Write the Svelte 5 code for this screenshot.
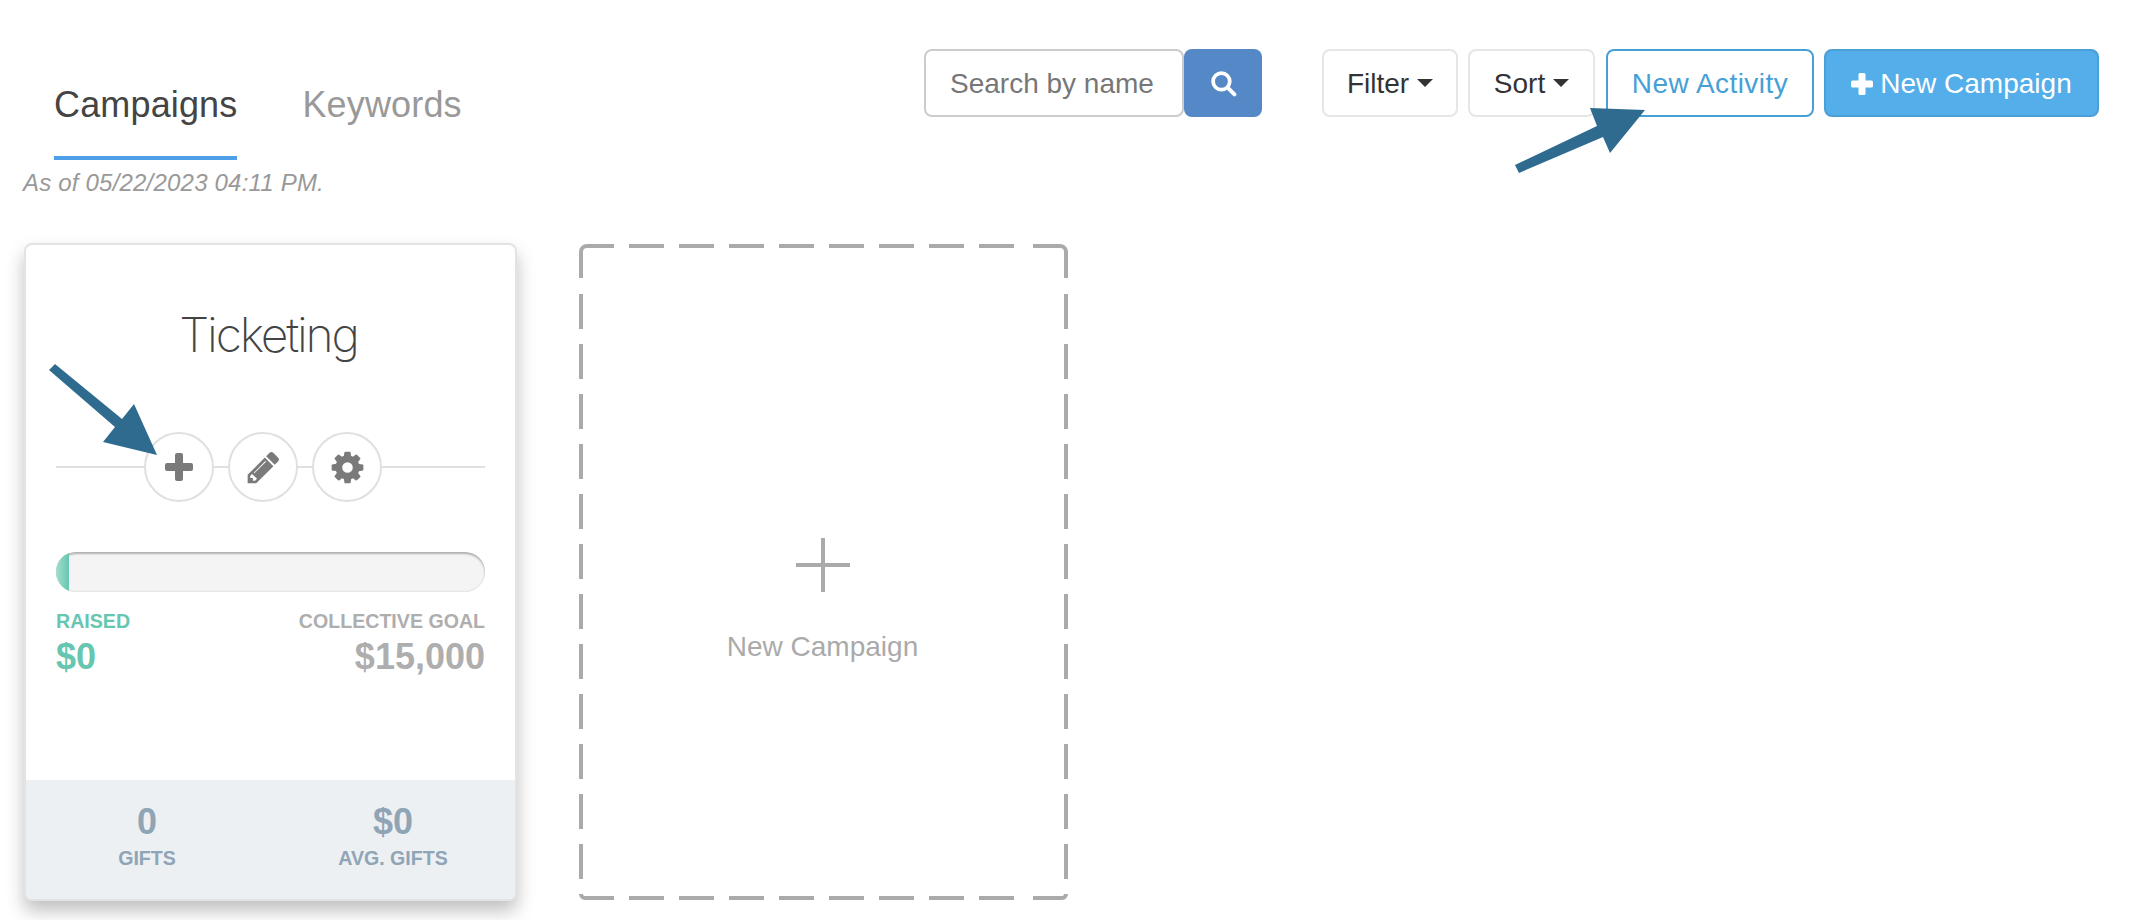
<script>
  const cog = "M1152 896q0-106-75-181t-181-75-181 75-75 181 75 181 181 75 181-75 75-181zm512-109v222q0 12-8 23t-20 13l-185 28q-19 54-39 91 35 50 107 138 10 12 10 25t-9 23q-27 37-99 108t-94 71q-12 0-26-9l-138-108q-44 23-91 38-16 136-29 186-7 28-36 28h-222q-14 0-24.5-8.5t-11.5-21.5l-28-184q-49-16-90-37l-141 107q-10 9-25 9-14 0-25-11-126-114-165-168-7-10-7-23 0-12 8-23 15-21 51-66.5t54-70.5q-27-50-41-99l-183-27q-13-2-21-12.5t-8-23.5v-222q0-12 8-23t19-13l186-28q14-46 39-92-40-57-107-138-10-12-10-24 0-10 9-23 26-36 98.5-107.5t94.5-71.5q13 0 26 10l138 107q44-23 91-38 16-136 29-186 7-28 36-28h222q14 0 24.5 8.5t11.5 21.5l28 184q49 16 90 37l142-107q9-9 24-9 13 0 25 10 129 119 165 170 7 8 7 22 0 12-8 23-15 21-51 66.5t-54 70.5q26 50 41 98l183 28q13 2 21 12.5t8 23.5z";
  const pencil = "M491 1536l91-91-235-235-91 91v107h128v128h107zm523-928q0-22-22-22-10 0-17 7l-542 542q-7 7-7 17 0 22 22 22 10 0 17-7l542-542q7-7 7-17zm-54-192l416 416-832 832h-416v-416zm683 96q0 53-37 90l-166 166-416-416 166-165q36-38 90-38 53 0 91 38l235 234q37 39 37 91z";
</script>

<div class="page">
  <header class="head">
    <div class="left">
      <nav class="tabs">
        <span class="tab active">Campaigns</span>
        <span class="tab">Keywords</span>
      </nav>
      <p class="asof">As of 05/22/2023 04:11 PM.</p>
    </div>
    <div class="tools">
      <div class="search">
        <input class="input" placeholder="Search by name" />
        <button class="searchbtn" aria-label="Search">
          <svg viewBox="0 0 26 26" width="27" height="27"><circle cx="11" cy="11" r="8" fill="none" stroke="#fff" stroke-width="3.6"/><path d="M17 17l6.5 6.5" stroke="#fff" stroke-width="3.8" stroke-linecap="round"/></svg>
        </button>
      </div>
      <div class="btns">
        <button class="btn filter">Filter <i class="caret"></i></button>
        <button class="btn sort">Sort <i class="caret"></i></button>
        <button class="btn outline">New Activity</button>
        <button class="btn primary">
          <svg viewBox="0 0 22 22" width="22" height="22" fill="#fff"><rect x="7.5" y="0" width="7" height="22" rx="1.5"/><rect x="0" y="7.5" width="22" height="7" rx="1.5"/></svg>
          New Campaign
        </button>
      </div>
    </div>
  </header>

  <main class="cards">
    <article class="card">
      <div class="body">
        <h2 class="title">Ticketing</h2>
        <div class="actions">
          <span class="circle"><svg viewBox="0 0 28 28" width="28" height="28" fill="#7a7a7a"><rect x="10" y="0" width="8" height="28" rx="2"/><rect x="0" y="10" width="28" height="8" rx="2"/></svg></span>
          <span class="circle"><svg viewBox="0 0 1792 1792" width="37" height="37"><path fill="#7a7a7a" d={pencil}/></svg></span>
          <span class="circle"><svg viewBox="0 0 1792 1792" width="37" height="37"><path fill="#7a7a7a" d={cog}/></svg></span>
        </div>
        <div class="bar"><div class="fill"></div></div>
        <div class="totals">
          <div class="raised"><div class="label">RAISED</div><div class="amount">$0</div></div>
          <div class="goal"><div class="label">COLLECTIVE GOAL</div><div class="amount">$15,000</div></div>
        </div>
      </div>
      <div class="stats">
        <div class="stat first"><div class="num">0</div><div class="label">GIFTS</div></div>
        <div class="stat second"><div class="num">$0</div><div class="label">AVG. GIFTS</div></div>
      </div>
    </article>

    <article class="newcard">
      <svg class="dashes" viewBox="0 0 489 656" width="489" height="656" fill="none" stroke="#aaa" stroke-width="4">
        <path d="M2 34V8a6 6 0 0 1 6-6H35"/>
        <path d="M454 2H481a6 6 0 0 1 6 6V34"/>
        <path d="M2 650a4 4 0 0 0 4 4H35"/>
        <path d="M454 654H483a4 4 0 0 0 4-4"/>
        <path d="M50 2H440" stroke-dasharray="35 15"/>
        <path d="M50 654H440" stroke-dasharray="35 15"/>
        <path d="M2 50V636" stroke-dasharray="35 15"/>
        <path d="M487 50V636" stroke-dasharray="35 15"/>
      </svg>
      <svg class="bigplus" viewBox="0 0 54 54" width="54" height="54"><path d="M27 0v54M0 27h54" stroke="#aaa" stroke-width="4"/></svg>
      <span class="newlabel">New Campaign</span>
    </article>
  </main>

  <svg class="arrows" viewBox="0 0 2152 920" width="2152" height="920" aria-hidden="true">
    <polygon fill="#2e6b8f" points="49,370 55,364 122,419 134,404 157,455 103,442 115,427"/>
    <polygon fill="#2e6b8f" points="1515,165 1519,173 1603,137 1610,153 1645,110 1590,108 1597,126"/>
  </svg>
</div>

<style>
  :global(body) { margin: 0; background: #fff; }
  .page {
    position: relative;
    width: 2152px;
    height: 920px;
    overflow: hidden;
    font-family: "Liberation Sans", Arial, sans-serif;
    box-sizing: border-box;
    padding: 49px 53px 0 24px;
  }
  .head { display: flex; justify-content: space-between; align-items: flex-start; height: 194px; }
  .left { display: flex; flex-direction: column; }
  .tabs { display: flex; gap: 65px; margin-left: 30px; padding-top: 34px; }
  .tab { font-size: 36px; line-height: 44px; letter-spacing: .15px; color: #999; padding-bottom: 29px; border-bottom: 4px solid transparent; }
  .tab.active { color: #444; border-bottom-color: #4f9fe8; }
  .asof { margin: 8px 0 0 -1px; font-size: 24px; line-height: 30px; letter-spacing: .2px; font-style: italic; color: #999; }
  .tools { display: flex; gap: 60px; }
  .search { display: flex; }
  .input {
    box-sizing: border-box; width: 260px; height: 68px; padding: 2px 24px 0;
    border: 2px solid #ccc; border-radius: 8px;
    font: 28px "Liberation Sans", Arial, sans-serif; color: #333; outline: none;
  }
  .input::placeholder { color: #777; opacity: 1; }
  .searchbtn {
    width: 78px; height: 68px; padding: 0; border: 0; border-radius: 8px;
    background: #5588c6; display: flex; align-items: center; justify-content: center;
  }
  .btns { display: flex; gap: 10px; }
  .btn {
    box-sizing: border-box; height: 68px; padding: 2px 0 0; border: 2px solid #e6e6e6; border-radius: 8px;
    background: #fff; color: #333; font: 28px "Liberation Sans", Arial, sans-serif;
    display: flex; align-items: center; justify-content: center; gap: 8px;
  }
  .filter { width: 136px; }
  .sort { width: 127px; }
  .outline { width: 208px; margin-left: 1px; border-color: #46a0d6; color: #46a0d6; letter-spacing: .45px; }
  .primary { width: 275px; gap: 7px; background: #53aee9; border-color: #4a9fd6; color: #fff; }
  .caret { width: 0; height: 0; margin-top: -2px; border-top: 8px solid #333; border-left: 8px solid transparent; border-right: 8px solid transparent; }

  .cards { display: flex; gap: 62px; align-items: flex-start; }
  .card {
    box-sizing: border-box; width: 493px; height: 658px; border: 2px solid #e3e3e3; border-radius: 8px;
    background: #fff; box-shadow: 0 10px 18px rgba(0,0,0,.25);
    display: flex; flex-direction: column; overflow: hidden;
  }
  .body { flex: 1; padding: 0 30px 0 30px; }
  .title {
    margin: 60px 0 0; padding-right: 4px; text-align: center; font-family: Inter, sans-serif; font-weight: 200; font-size: 48px; line-height: 60px; letter-spacing: -2.2px; color: #444;
  }
  .actions {
    display: flex; gap: 14px; margin-top: 67px; padding-left: 88px; position: relative;
  }
  .actions::before { content: ""; position: absolute; left: 0; right: 0; top: 34px; height: 2px; background: #e0e0e0; }
  .circle {
    position: relative; box-sizing: border-box; width: 70px; height: 70px; border: 2px solid #e0e0e0; border-radius: 50%;
    background: #fff; display: flex; align-items: center; justify-content: center;
  }
  .bar {
    margin-top: 50px; height: 40px; border-radius: 20px; background: #f4f4f4; overflow: hidden;
    box-shadow: inset 0 2px 2px rgba(0,0,0,.28), inset 0 -1px 2px rgba(0,0,0,.08);
  }
  .fill { width: 13px; height: 100%; background: linear-gradient(90deg, #a5ddcf, #66c6b0); }
  .totals { display: flex; justify-content: space-between; margin-top: 17px; }
  .goal { text-align: right; color: #aeaeae; }
  .raised { color: #66c6b0; }
  .label { font-size: 19.6px; line-height: 24px; font-weight: 700; }
  .amount { margin-top: 2px; font-size: 36px; line-height: 44px; font-weight: 700; }
  .stats { display: flex; height: 119px; background: #edf0f3; color: #8fa5b6; }
  .stat { text-align: center; padding-top: 20px; }
  .first { flex: 0 0 242px; }
  .second { flex: 0 0 250px; }
  .stat .label { margin-top: 2px; }
  .num { font-size: 36px; line-height: 44px; font-weight: 700; }
  .newcard {
    position: relative; box-sizing: border-box; width: 489px; height: 656px; margin-top: 1px;
    display: flex; flex-direction: column; align-items: center; padding: 294px 2px 0 0; color: #aaa;
  }
  .dashes { position: absolute; left: 0; top: 0; }
  .newlabel { margin-top: 38px; font-size: 28px; line-height: 34px; }
  .arrows { position: absolute; left: 0; top: 0; pointer-events: none; }
</style>
